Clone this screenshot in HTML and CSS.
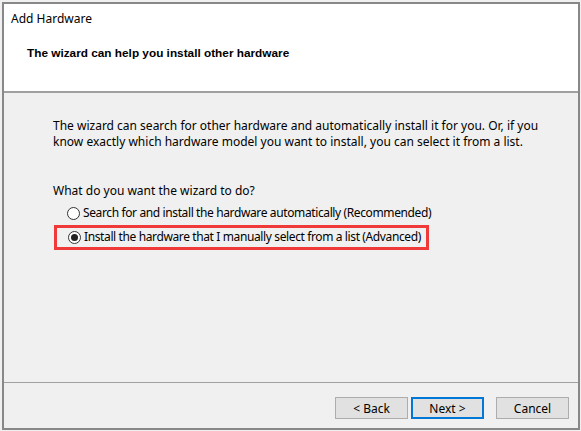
FILE: index.html
```html
<!DOCTYPE html>
<html>
<head>
<meta charset="utf-8">
<link rel="stylesheet" href="styles.css">
</head>
<body>
<div class="window">
  <div class="header">
    <div class="title">Add Hardware</div>
    <div class="heading">The wizard can help you install other hardware</div>
  </div>
  <div class="content">
    <p class="intro">The wizard can search for other hardware and automatically install it for you. Or, if you<br>know exactly which hardware model you want to install, you can select it from a list.</p>
    <p class="question">What do you want the wizard to do?</p>
    <div class="options">
      <label class="option"><span class="radio"></span>Search for and install the hardware automatically (Recommended)</label>
      <label class="option selected"><span class="radio checked"></span>Install the hardware that I manually select from a list (Advanced)</label>
    </div>
  </div>
  <div class="footer">
    <button class="btn">&lt; Back</button>
    <button class="btn primary">Next &gt;</button>
    <button class="btn cancel">Cancel</button>
  </div>
</div>
</body>
</html>
```
FILE: styles.css
```css
html, body {
  margin: 0;
  padding: 0;
  background: #f0f0f0;
  width: 581px;
  height: 431px;
  overflow: hidden;
}
body {
  font-family: "Noto Sans", "Open Sans", sans-serif;
  font-size: 12px;
  color: #000;
}
.window {
  margin: 2px 0 0 2px;
  width: 578px;
  height: 428px;
  box-sizing: border-box;
  border: 2px solid #888;
  background: #f0f0f0;
  display: flex;
  flex-direction: column;
}
.header {
  background: #fff;
  height: 87px;
  border-bottom: 2px solid #a0a0a0;
  box-sizing: content-box;
}
.title {
  padding: 7px 0 0 7px;
  line-height: 16px;
}
.heading {
  font-family: "Liberation Sans", sans-serif;
  font-weight: bold;
  font-size: 11.8px;
  padding: 19px 0 0 23px;
  line-height: 14px;
}
.content {
  flex: 1;
  padding: 25px 0 0 49px;
}
.intro {
  margin: 0;
  line-height: 16px;
}
.question {
  margin: 33px 0 0 0;
  line-height: 16px;
}
.options {
  margin-top: 6px;
  display: flex;
  flex-direction: column;
  align-items: flex-start;
  gap: 4px;
}
.option {
  display: flex;
  align-items: center;
  gap: 3px;
  line-height: 16px;
  padding-left: 14px;
  white-space: nowrap;
  letter-spacing: -0.38px;
}
.option.selected {
  margin-left: 1px;
  padding: 1px 5px 2px 11px;
  border: 3px solid #f03a3a;
}
.radio {
  width: 11px;
  height: 11px;
  border: 1px solid #333;
  border-radius: 50%;
  background: #fff;
  box-sizing: content-box;
  display: inline-block;
  position: relative;
  flex: none;
}
.radio.checked::after {
  content: "";
  position: absolute;
  left: 2px;
  top: 2px;
  width: 7px;
  height: 7px;
  border-radius: 50%;
  background: #222;
}
.footer {
  border-top: 1px solid #a0a0a0;
  display: flex;
  align-items: flex-start;
  padding: 14px 0 0 331px;
  box-sizing: border-box;
  height: 46px;
}
.btn {
  width: 73px;
  height: 22px;
  font: inherit;
  font-size: 12px;
  background: #e1e1e1;
  border: 1px solid #adadad;
  color: #000;
  padding: 0;
  margin: 0 3px 0 0;
}
.btn.primary {
  border: 2px solid #0078d7;
}
.btn.cancel {
  margin-left: 9px;
}
```
